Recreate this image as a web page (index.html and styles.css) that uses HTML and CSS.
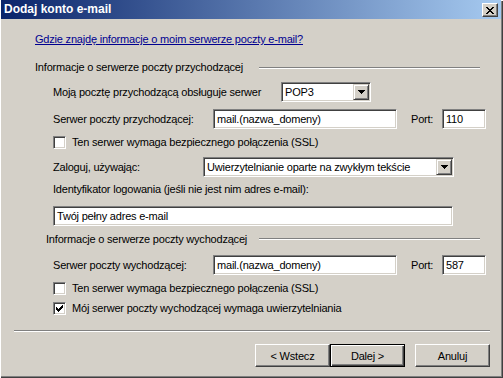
FILE: index.html
```html
<!DOCTYPE html>
<html lang="pl">
<head>
    <meta charset="UTF-8">
    <title>Dodaj konto e-mail</title>
    <link rel="stylesheet" href="styles.css">
</head>
<body>
    <div class="window">
        <div class="titlebar">
            <span class="title">Dodaj konto e-mail</span>
            <button class="close">
                <svg width="8" height="7" viewBox="0 0 8 7" shape-rendering="crispEdges"><path d="M0 0h2v1h-2z M6 0h2v1h-2z M1 1h2v1h-2z M5 1h2v1h-2z M2 2h4v1h-4z M3 3h2v1h-2z M2 4h4v1h-4z M1 5h2v1h-2z M5 5h2v1h-2z M0 6h2v1h-2z M6 6h2v1h-2z" fill="#000"/></svg>
            </button>
        </div>

        <div class="content">
            <a class="help-link" href="#">Gdzie znajdę informacje o moim serwerze poczty e-mail?</a>

            <div class="group-head incoming">
                <span>Informacje o serwerze poczty przychodzącej</span>
                <span class="etch"></span>
            </div>

            <div class="row row-type">
                <span class="lbl w-type">Moją pocztę przychodzącą obsługuje serwer</span>
                <div class="combo w-pop">
                    <span class="combo-text">POP3</span>
                    <span class="combo-btn"><svg width="7" height="4" viewBox="0 0 7 4" shape-rendering="crispEdges"><path d="M0 0H7V1H6V2H5V3H4V4H3V3H2V2H1V1H0Z" fill="#000"/></svg></span>
                </div>
            </div>

            <div class="row row-in">
                <span class="lbl w-server">Serwer poczty przychodzącej:</span>
                <span class="edit w-host">mail.(nazwa_domeny)</span>
                <span class="port-lbl">Port:</span>
                <span class="edit w-port">110</span>
            </div>

            <div class="check-row row-ssl-in">
                <span class="check"></span>
                <span>Ten serwer wymaga bezpiecznego połączenia (SSL)</span>
            </div>

            <div class="row row-login">
                <span class="lbl w-login">Zaloguj, używając:</span>
                <div class="combo w-auth">
                    <span class="combo-text">Uwierzytelnianie oparte na zwykłym tekście</span>
                    <span class="combo-btn"><svg width="7" height="4" viewBox="0 0 7 4" shape-rendering="crispEdges"><path d="M0 0H7V1H6V2H5V3H4V4H3V3H2V2H1V1H0Z" fill="#000"/></svg></span>
                </div>
            </div>

            <div class="plain-lbl">Identyfikator logowania (jeśli nie jest nim adres e-mail):</div>

            <div class="row row-user">
                <span class="edit w-user">Twój pełny adres e-mail</span>
            </div>

            <div class="group-head outgoing">
                <span>Informacje o serwerze poczty wychodzącej</span>
                <span class="etch"></span>
            </div>

            <div class="row row-out">
                <span class="lbl w-server">Serwer poczty wychodzącej:</span>
                <span class="edit w-host">mail.(nazwa_domeny)</span>
                <span class="port-lbl">Port:</span>
                <span class="edit w-port">587</span>
            </div>

            <div class="check-row row-ssl-out">
                <span class="check"></span>
                <span>Ten serwer wymaga bezpiecznego połączenia (SSL)</span>
            </div>

            <div class="check-row row-auth">
                <span class="check">
                    <svg width="7" height="7" viewBox="0 0 7 7" shape-rendering="crispEdges"><path d="M0 2H1V3H2V4H3V3H4V2H5V1H6V0H7V3H6V4H5V5H4V6H3V7H2V6H1V5H0Z" fill="#000"/></svg>
                </span>
                <span>Mój serwer poczty wychodzącej wymaga uwierzytelniania</span>
            </div>
        </div>

        <div class="footer">
            <div class="etch footer-etch"></div>
            <div class="buttons">
                <button class="button">&lt; Wstecz</button>
                <button class="button default">Dalej &gt;</button>
                <button class="button cancel">Anuluj</button>
            </div>
        </div>
    </div>
</body>
</html>
```

FILE: styles.css
```css
:root {
    --face: #D4D0C8;
    --shadow: #808080;
    --dark: #404040;
    --light: #FFFFFF;
}
* {
    box-sizing: border-box;
}
body {
    margin: 0;
    background: var(--face);
    font-family: "Liberation Sans", Arial, sans-serif;
    font-size: 11px;
    letter-spacing: -0.2px;
    color: #000;
}
.window {
    width: 503px;
    height: 378px;
    background: var(--face);
    box-shadow: inset 1px 1px var(--light), inset -1px -1px var(--dark), inset -2px -2px var(--shadow);
    display: flex;
    flex-direction: column;
}
.titlebar {
    height: 19px;
    margin: 0 2px 0 1px;
    padding: 0 3px;
    background: linear-gradient(to right, #0A246A, #A6CAF0);
    display: flex;
    justify-content: space-between;
}
.title {
    color: #fff;
    font-weight: bold;
    font-size: 12px;
    letter-spacing: 0;
    line-height: 19px;
}
.close {
    width: 16px;
    height: 14px;
    margin-top: 3px;
    padding: 0;
    background: var(--face);
    border: 1px solid;
    border-color: var(--light) var(--dark) var(--dark) var(--light);
    box-shadow: inset -1px -1px var(--shadow);
    display: flex;
    align-items: center;
    justify-content: center;
}
.content {
    flex: 1;
}
.help-link {
    display: block;
    width: max-content;
    margin: 14px 0 0 35px;
    line-height: 13px;
    color: #000090;
    text-decoration: underline;
}
.group-head {
    display: flex;
    line-height: 13px;
    margin-right: 23px;
}
.group-head.incoming {
    margin-top: 15px;
    margin-left: 35px;
}
.group-head.outgoing {
    margin-top: 7px;
    margin-left: 46px;
}
.etch {
    height: 2px;
    border-top: 1px solid var(--shadow);
    border-bottom: 1px solid var(--light);
}
.group-head .etch {
    flex: 1;
    margin-top: 6px;
}
.group-head.incoming .etch {
    margin-left: 16px;
}
.group-head.outgoing .etch {
    margin-left: 12px;
    margin-top: 5px;
}
.row {
    display: flex;
    align-items: center;
    margin-left: 53px;
    height: 20px;
    line-height: 13px;
}
.row-type { margin-top: 8px; }
.row-in { margin-top: 7px; }
.row-login { margin-top: 8px; }
.row-user { margin-top: 10px; }
.row-out { margin-top: 9px; }
.lbl {
    flex-shrink: 0;
}
.w-type { width: 228px; }
.w-server { width: 160px; }
.w-login { width: 150px; }
.edit,
.combo {
    height: 20px;
    background: #fff;
    border: 1px solid;
    border-color: var(--shadow) var(--light) var(--light) var(--shadow);
    box-shadow: inset 1px 1px var(--dark), inset -1px -1px var(--face);
}
.edit {
    padding: 0 3px;
    line-height: 18px;
    white-space: nowrap;
}
.w-host { width: 184px; }
.w-port { width: 44px; }
.w-user { width: 400px; }
.port-lbl {
    width: 31px;
    margin-left: 14px;
}
.combo {
    display: flex;
    padding: 1px;
}
.w-pop { width: 90px; }
.w-auth { width: 251px; }
.combo-text {
    flex: 1;
    padding-left: 2px;
    line-height: 16px;
    white-space: nowrap;
}
.combo-btn {
    width: 16px;
    height: 16px;
    background: var(--face);
    border: 1px solid;
    border-color: var(--face) var(--dark) var(--dark) var(--face);
    box-shadow: inset 1px 1px var(--light), inset -1px -1px var(--shadow);
    display: flex;
    align-items: center;
    justify-content: center;
}
.check-row {
    display: flex;
    align-items: center;
    margin-left: 53px;
    height: 13px;
    line-height: 13px;
}
.row-ssl-in { margin-top: 7px; }
.row-ssl-out { margin-top: 7px; }
.row-auth { margin-top: 7px; }
.check {
    width: 13px;
    height: 13px;
    margin-right: 6px;
    background: #fff;
    border: 1px solid;
    border-color: var(--shadow) var(--light) var(--light) var(--shadow);
    box-shadow: inset 1px 1px var(--dark), inset -1px -1px var(--face);
    display: flex;
    align-items: center;
    justify-content: center;
}
.plain-lbl {
    margin: 6px 0 0 53px;
    line-height: 13px;
}
.footer {
    height: 48px;
}
.footer-etch {
    margin: 0 13px 0 14px;
}
.buttons {
    display: flex;
    justify-content: flex-end;
    margin: 12px 13px 0 0;
}
.button {
    width: 75px;
    height: 23px;
    padding: 0;
    font-family: inherit;
    font-size: 11px;
    letter-spacing: -0.2px;
    color: #000;
    background: var(--face);
    border: 1px solid;
    border-color: var(--light) var(--dark) var(--dark) var(--light);
    box-shadow: inset -1px -1px var(--shadow);
}
.button.default {
    border-color: #000;
    box-shadow: inset 1px 1px var(--light), inset -1px -1px var(--dark), inset -2px -2px var(--shadow);
}
.button.cancel {
    margin-left: 10px;
}
```
